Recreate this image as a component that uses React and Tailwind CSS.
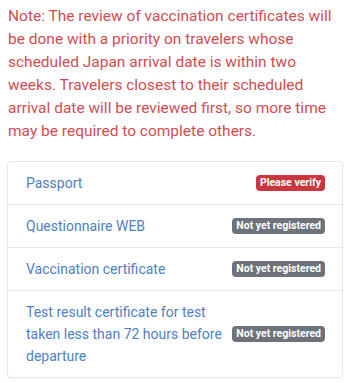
import React from "react";

const rows = [
  { label: "Passport", badge: "Please verify", red: true },
  { label: "Questionnaire WEB", badge: "Not yet registered" },
  { label: "Vaccination certificate", badge: "Not yet registered" },
  { label: "Test result certificate for test taken less than 72 hours before departure", badge: "Not yet registered" },
];

export default function App() {
  return (
    <div className="w-[350px] h-[383px] bg-white overflow-hidden" style={{ fontFamily: "Roboto, 'Liberation Sans', sans-serif" }}>
      <p className="pl-2 pr-2 pt-[5px] text-[15.5px] leading-[23px] text-[#cf4d52]">
        Note: The review of vaccination certificates will be done with a priority on travelers whose scheduled Japan arrival date is within two weeks. Travelers closest to their scheduled arrival date will be reviewed first, so more time may be required to complete others.
      </p>
      <div className="mx-[7px] mt-[18px] border border-[#e6e8eb] rounded-[4px] shadow-[0_1px_2px_rgba(0,0,0,0.05)]">
        {rows.map((r, i) => (
          <div key={i} className={`flex items-center justify-between gap-2 pl-[18px] pr-[17px] py-[10px] ${i > 0 ? "border-t border-[#e6e8eb]" : ""}`}>
            <span className="text-[14px] leading-[22px] text-[#5080bf] max-w-[205px]">{r.label}</span>
            <span className={`text-[10.5px] font-bold leading-none text-white rounded-[4px] px-[4px] py-[3px] whitespace-nowrap ${r.red ? "bg-[#c9363e]" : "bg-[#6c737a]"}`}>{r.badge}</span>
          </div>
        ))}
      </div>
    </div>
  );
}
